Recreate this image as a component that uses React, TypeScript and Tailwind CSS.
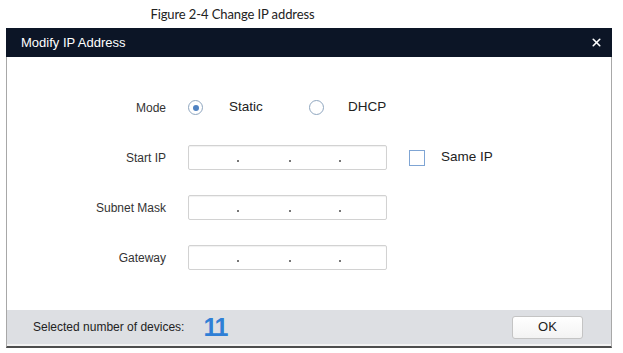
import { X } from 'lucide-react'

function Radio({ checked }: { checked?: boolean }) {
  return (
    <span className="flex h-[15px] w-[15px] items-center justify-center rounded-full border border-[#8fa6bf] bg-white">
      {checked && <span className="h-[6px] w-[6px] rounded-full bg-[#4f82c2]" />}
    </span>
  )
}

function IpInput() {
  return (
    <div className="relative h-[25px] w-[199px] rounded-[2px] border border-[#d2d2d2] bg-white shadow-[inset_0_1px_1px_rgba(0,0,0,0.06)]">
      <span className="absolute left-[48px] top-[14px] h-[2px] w-[2px] bg-[#777]" />
      <span className="absolute left-[100px] top-[14px] h-[2px] w-[2px] bg-[#777]" />
      <span className="absolute left-[150px] top-[14px] h-[2px] w-[2px] bg-[#777]" />
    </div>
  )
}

function Label({ children }: { children: string }) {
  return <div className="w-[160px] shrink-0 pr-[1px] text-right text-[12px] text-[#333]">{children}</div>
}

export default function App() {
  return (
    <div className="h-[353px] w-[623px] bg-white font-['Liberation_Sans',Arial,sans-serif]">
      {/* Caption */}
      <div className="flex h-[28px] justify-center pt-[5px]">
        <span className="ml-[-158px] font-['Lato',sans-serif] text-[13px] tracking-[-0.1px] text-[#222]">
          Figure 2-4 Change IP address
        </span>
      </div>

      {/* Dialog */}
      <div className="ml-[6px] w-[606px]">
        <div className="flex h-[29px] items-center justify-between bg-[#0c1526] pl-[15px] pr-[9px]">
          <span className="text-[13px] text-white">Modify IP Address</span>
          <X size={13} strokeWidth={3} className="text-white" />
        </div>

        <div className="h-[253px] border-x border-[#a8a8a8] bg-white pt-[38px]">
          <div className="flex flex-col gap-[25px]">
            <div className="flex h-[25px] items-center">
              <Label>Mode</Label>
              <div className="ml-[21px] flex items-center text-[13.5px] text-[#222]">
                <Radio checked />
                <span className="ml-[26px] w-[80px]">Static</span>
                <Radio />
                <span className="ml-[24px]">DHCP</span>
              </div>
            </div>

            <div className="flex h-[25px] items-center">
              <Label>Start IP</Label>
              <div className="ml-[21px] flex items-center">
                <IpInput />
                <span className="ml-[22px] h-[16px] w-[16px] border border-[#7fa5d4] bg-white" />
                <span className="ml-[16px] text-[13.5px] text-[#222]">Same IP</span>
              </div>
            </div>

            <div className="flex h-[25px] items-center">
              <Label>Subnet Mask</Label>
              <div className="ml-[21px]">
                <IpInput />
              </div>
            </div>

            <div className="flex h-[25px] items-center">
              <Label>Gateway</Label>
              <div className="ml-[21px]">
                <IpInput />
              </div>
            </div>
          </div>
        </div>

        {/* Footer */}
        <div className="border-x border-b-[2px] border-x-[#a8a8a8] border-b-[#4d4d4d] bg-[#f2f2f2] pb-[2px]">
          <div className="flex h-[34px] items-center bg-[#dddfe3] pl-[26px] pr-[28px]">
            <span className="text-[12px] text-[#222]">Selected number of devices:</span>
            <span className="ml-[19px] text-[25px] font-bold leading-none tracking-[-1.5px] text-[#2f7fd6]">11</span>
            <button
              type="button"
              className="ml-auto h-[23px] w-[71px] rounded-[3px] border border-[#c4c4c4] bg-gradient-to-b from-white to-[#f3f3f3] text-[13px] text-[#222]"
            >
              OK
            </button>
          </div>
        </div>
      </div>
    </div>
  )
}
